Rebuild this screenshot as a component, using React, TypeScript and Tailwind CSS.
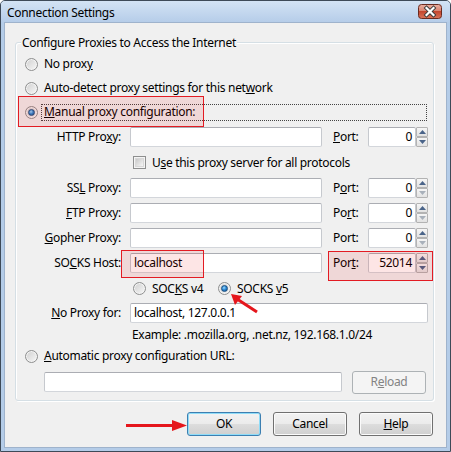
import React from "react";

function Radio({ checked }: { checked?: boolean }) {
  return (
    <span className="relative inline-flex w-[13px] h-[13px] shrink-0 rounded-full border border-[#8e8f8f] bg-linear-to-br from-[#cfcfcf] to-[#f8f8f8] items-center justify-center shadow-[inset_0_0_0_1px_#f4f4f4]">
      {checked && (
        <span className="w-[7px] h-[7px] rounded-full border border-[#1b4f80] bg-[radial-gradient(circle_at_40%_35%,#9fdcff_0%,#2c8ad6_45%,#0e4a84_100%)]" />
      )}
    </span>
  );
}

function Checkbox() {
  return (
    <span className="inline-flex w-[13px] h-[13px] shrink-0 border border-[#8e8f8f] bg-[#f4f4f4] items-center justify-center">
      <span className="w-[9px] h-[9px] bg-linear-to-br from-[#c9c9c9] to-[#f6f6f6] border border-[#d8d8d8]" />
    </span>
  );
}

function TextBox({ className, value }: { className: string; value?: string }) {
  return (
    <div
      className={
        "h-[20px] bg-white border border-[#abadb3] border-x-[#c6c9ce] border-b-[#d3d6db] rounded-[2px] flex items-center pl-[3px] whitespace-nowrap overflow-hidden " +
        className
      }
    >
      {value}
    </div>
  );
}

function Tri({ up, dim }: { up?: boolean; dim?: boolean }) {
  return (
    <svg width="7" height="4" viewBox="0 0 7 4">
      {up ? (
        <path d="M0 4 L3.5 0 L7 4 Z" fill={dim ? "#a8b0ba" : "#4a6489"} />
      ) : (
        <path d="M0 0 L3.5 4 L7 0 Z" fill={dim ? "#a8b0ba" : "#4a6489"} />
      )}
    </svg>
  );
}

function PortBox({ value, downDim }: { value: string; downDim?: boolean }) {
  return (
    <div className="flex h-[20px]">
      <div className="w-[48px] h-full bg-white border border-[#abadb3] border-x-[#c6c9ce] border-b-[#d3d6db] rounded-[2px] flex items-center justify-end pr-[3px]">
        {value}
      </div>
      <div className="w-[12px] h-full flex flex-col">
        <div className="h-[10px] border border-[#b3b3b3] rounded-[1px] bg-linear-to-b from-[#f6f6f6] to-[#e2e2e2] flex items-center justify-center">
          <Tri up />
        </div>
        <div className="h-[10px] border border-[#b3b3b3] rounded-[1px] bg-linear-to-b from-[#f6f6f6] to-[#e2e2e2] flex items-center justify-center">
          <Tri dim={downDim} />
        </div>
      </div>
    </div>
  );
}

function CloseButton() {
  return (
    <svg width="24" height="15" viewBox="0 0 24 15">
      <defs>
        <linearGradient id="cbg" x1="0" y1="0" x2="0" y2="1">
          <stop offset="0" stopColor="#eab0a2" />
          <stop offset="0.45" stopColor="#d98573" />
          <stop offset="0.5" stopColor="#c4462e" />
          <stop offset="1" stopColor="#d8735a" />
        </linearGradient>
      </defs>
      <rect x="0.5" y="0.5" width="23" height="14" rx="3" fill="url(#cbg)" stroke="#6a2a1f" />
      <path d="M8.5 4 L15.5 11 M15.5 4 L8.5 11" stroke="#3a3a3a" strokeWidth="4" strokeLinecap="square" />
      <path d="M8.5 4 L15.5 11 M15.5 4 L8.5 11" stroke="#ffffff" strokeWidth="2.2" strokeLinecap="square" />
    </svg>
  );
}

const btnBase =
  "w-[74px] h-[24px] rounded-[3px] border flex items-center justify-center bg-[linear-gradient(#f2f2f2_0%,#ebebeb_50%,#dddddd_50%,#cfcfcf_100%)]";

export default function App() {
  return (
    <div className="relative w-[451px] h-[452px] font-['Noto_Sans',sans-serif] text-[12px] tracking-[-0.3px] text-black leading-none">
      <div className="w-full h-full flex flex-col border border-[#3e4a58] rounded-t-[5px] bg-[#b4cce8]">
        {/* Title bar */}
        <div className="h-[21px] flex items-center justify-between pl-[6px] pr-[8px] bg-linear-to-b from-[#d3e3f4] to-[#b6cde9] rounded-t-[4px]">
          <span className="text-[12px] mt-[2px]">Connection Settings</span>
          <CloseButton />
        </div>
        {/* Content */}
        <div className="flex-1 mx-[3px] mb-[3px] border border-[#9fb3cc] bg-[#f0f0f0] flex flex-col">
          {/* Group box */}
          <div className="relative ml-[10px] mt-[19px] w-[419px] h-[359px] border border-[#d5dfe5] rounded-[3px] shadow-[inset_1px_1px_0_#ffffff,1px_1px_0_#ffffff] flex flex-col pt-[9px]">
            <span className="absolute left-[5px] -top-[7px] px-[1px] bg-[#f0f0f0] leading-[14px]">
              Configure Proxies to Access the Internet
            </span>

            <div className="h-[24px] flex items-center pl-[9px]">
              <Radio />
              <span className="ml-[6px]">
                No prox<u>y</u>
              </span>
            </div>
            <div className="h-[24px] flex items-center pl-[9px]">
              <Radio />
              <span className="ml-[6px]">
                Auto-detect proxy settings for this net<u>w</u>ork
              </span>
            </div>
            <div className="h-[24px] flex items-center pl-[9px] pr-[6px]">
              <Radio checked />
              <span className="ml-[3px] flex-1 h-[17px] border border-dotted border-[#444] flex items-center pl-[2px]">
                <span>
                  <u>M</u>anual proxy configuration:
                </span>
              </span>
            </div>

            <div className="h-[26px] flex items-center">
              <span className="w-[105px] text-right">
                HTTP Pro<u>x</u>y:
              </span>
              <TextBox className="ml-[9px] w-[192px]" />
              <span className="ml-[11px] w-[35px]">
                <u>P</u>ort:
              </span>
              <PortBox value="0" />
            </div>

            <div className="h-[25px] flex items-center pl-[117px]">
              <Checkbox />
              <span className="ml-[6px]">
                U<u>s</u>e this proxy server for all protocols
              </span>
            </div>

            <div className="h-[25px] flex items-center">
              <span className="w-[105px] text-right">
                SS<u>L</u> Proxy:
              </span>
              <TextBox className="ml-[9px] w-[192px]" />
              <span className="ml-[11px] w-[35px]">
                P<u>o</u>rt:
              </span>
              <PortBox value="0" downDim />
            </div>
            <div className="h-[25px] flex items-center">
              <span className="w-[105px] text-right">
                <u>F</u>TP Proxy:
              </span>
              <TextBox className="ml-[9px] w-[192px]" />
              <span className="ml-[11px] w-[35px]">
                Po<u>r</u>t:
              </span>
              <PortBox value="0" downDim />
            </div>
            <div className="h-[25px] flex items-center">
              <span className="w-[105px] text-right">
                <u>G</u>opher Proxy:
              </span>
              <TextBox className="ml-[9px] w-[192px]" />
              <span className="ml-[11px] w-[35px]">Port:</span>
              <PortBox value="0" downDim />
            </div>
            <div className="h-[26px] flex items-center">
              <span className="w-[105px] text-right">
                SO<u>C</u>KS Host:
              </span>
              <TextBox className="ml-[9px] w-[192px]" value="localhost" />
              <span className="ml-[11px] w-[35px]">
                Por<u>t</u>:
              </span>
              <PortBox value="52014" />
            </div>

            <div className="h-[25px] flex items-center pl-[117px]">
              <div className="w-[85px] flex items-center">
                <Radio />
                <span className="ml-[6px]">
                  SOC<u>K</u>S v4
                </span>
              </div>
              <Radio checked />
              <span className="ml-[6px]">
                SOCKS <u>v</u>5
              </span>
            </div>

            <div className="h-[24px] flex items-center">
              <span className="w-[105px] text-right">
                <u>N</u>o Proxy for:
              </span>
              <TextBox className="ml-[9px] w-[298px]" value="localhost, 127.0.0.1" />
            </div>

            <div className="h-[19px] flex items-center pl-[116px]">
              Example: .mozilla.org, .net.nz, 192.168.1.0/24
            </div>

            <div className="h-[24px] flex items-center pl-[9px]">
              <Radio />
              <span className="ml-[6px]">
                <u>A</u>utomatic proxy configuration URL:
              </span>
            </div>

            <div className="h-[28px] flex items-center pl-[28px]">
              <TextBox className="w-[298px]" />
              <div className="ml-[10px] w-[74px] h-[23px] rounded-[3px] border border-[#adb2b5] bg-[#f4f4f4] text-[#838383] flex items-center justify-center">
                <span>
                  R<u>e</u>load
                </span>
              </div>
            </div>
          </div>

          {/* Buttons */}
          <div className="mt-[11px] flex justify-end gap-[12px] pr-[13px]">
            <div className={btnBase + " border-[#3c7fb1] shadow-[inset_0_0_0_1px_#8fdcf8]"}>OK</div>
            <div className={btnBase + " border-[#707070] shadow-[inset_0_0_0_1px_#fbfbfb]"}>Cancel</div>
            <div className={btnBase + " border-[#707070] shadow-[inset_0_0_0_1px_#fbfbfb]"}>
              <span>
                <u>H</u>elp
              </span>
            </div>
          </div>
        </div>
      </div>

      {/* Annotation overlays */}
      <div className="absolute left-[18px] top-[96px] w-[186px] h-[31px] border border-[#e31b23] bg-[rgba(235,0,0,0.1)] pointer-events-none" />
      <div className="absolute left-[121px] top-[250px] w-[83px] h-[28px] border border-[#e31b23] bg-[rgba(235,0,0,0.1)] pointer-events-none" />
      <div className="absolute left-[328px] top-[251px] w-[105px] h-[30px] border border-[#e31b23] bg-[rgba(235,0,0,0.1)] pointer-events-none" />
      <svg className="absolute left-0 top-0 pointer-events-none" width="451" height="452" viewBox="0 0 451 452">
        <line x1="257" y1="312" x2="237" y2="299" stroke="#e5161c" strokeWidth="3" />
        <polygon points="231,294 242,296 235,305" fill="#e5161c" />
        <line x1="126" y1="425.5" x2="175" y2="425.5" stroke="#e5161c" strokeWidth="3" />
        <polygon points="187,425.5 172,420 172,431" fill="#e5161c" />
      </svg>
    </div>
  );
}
